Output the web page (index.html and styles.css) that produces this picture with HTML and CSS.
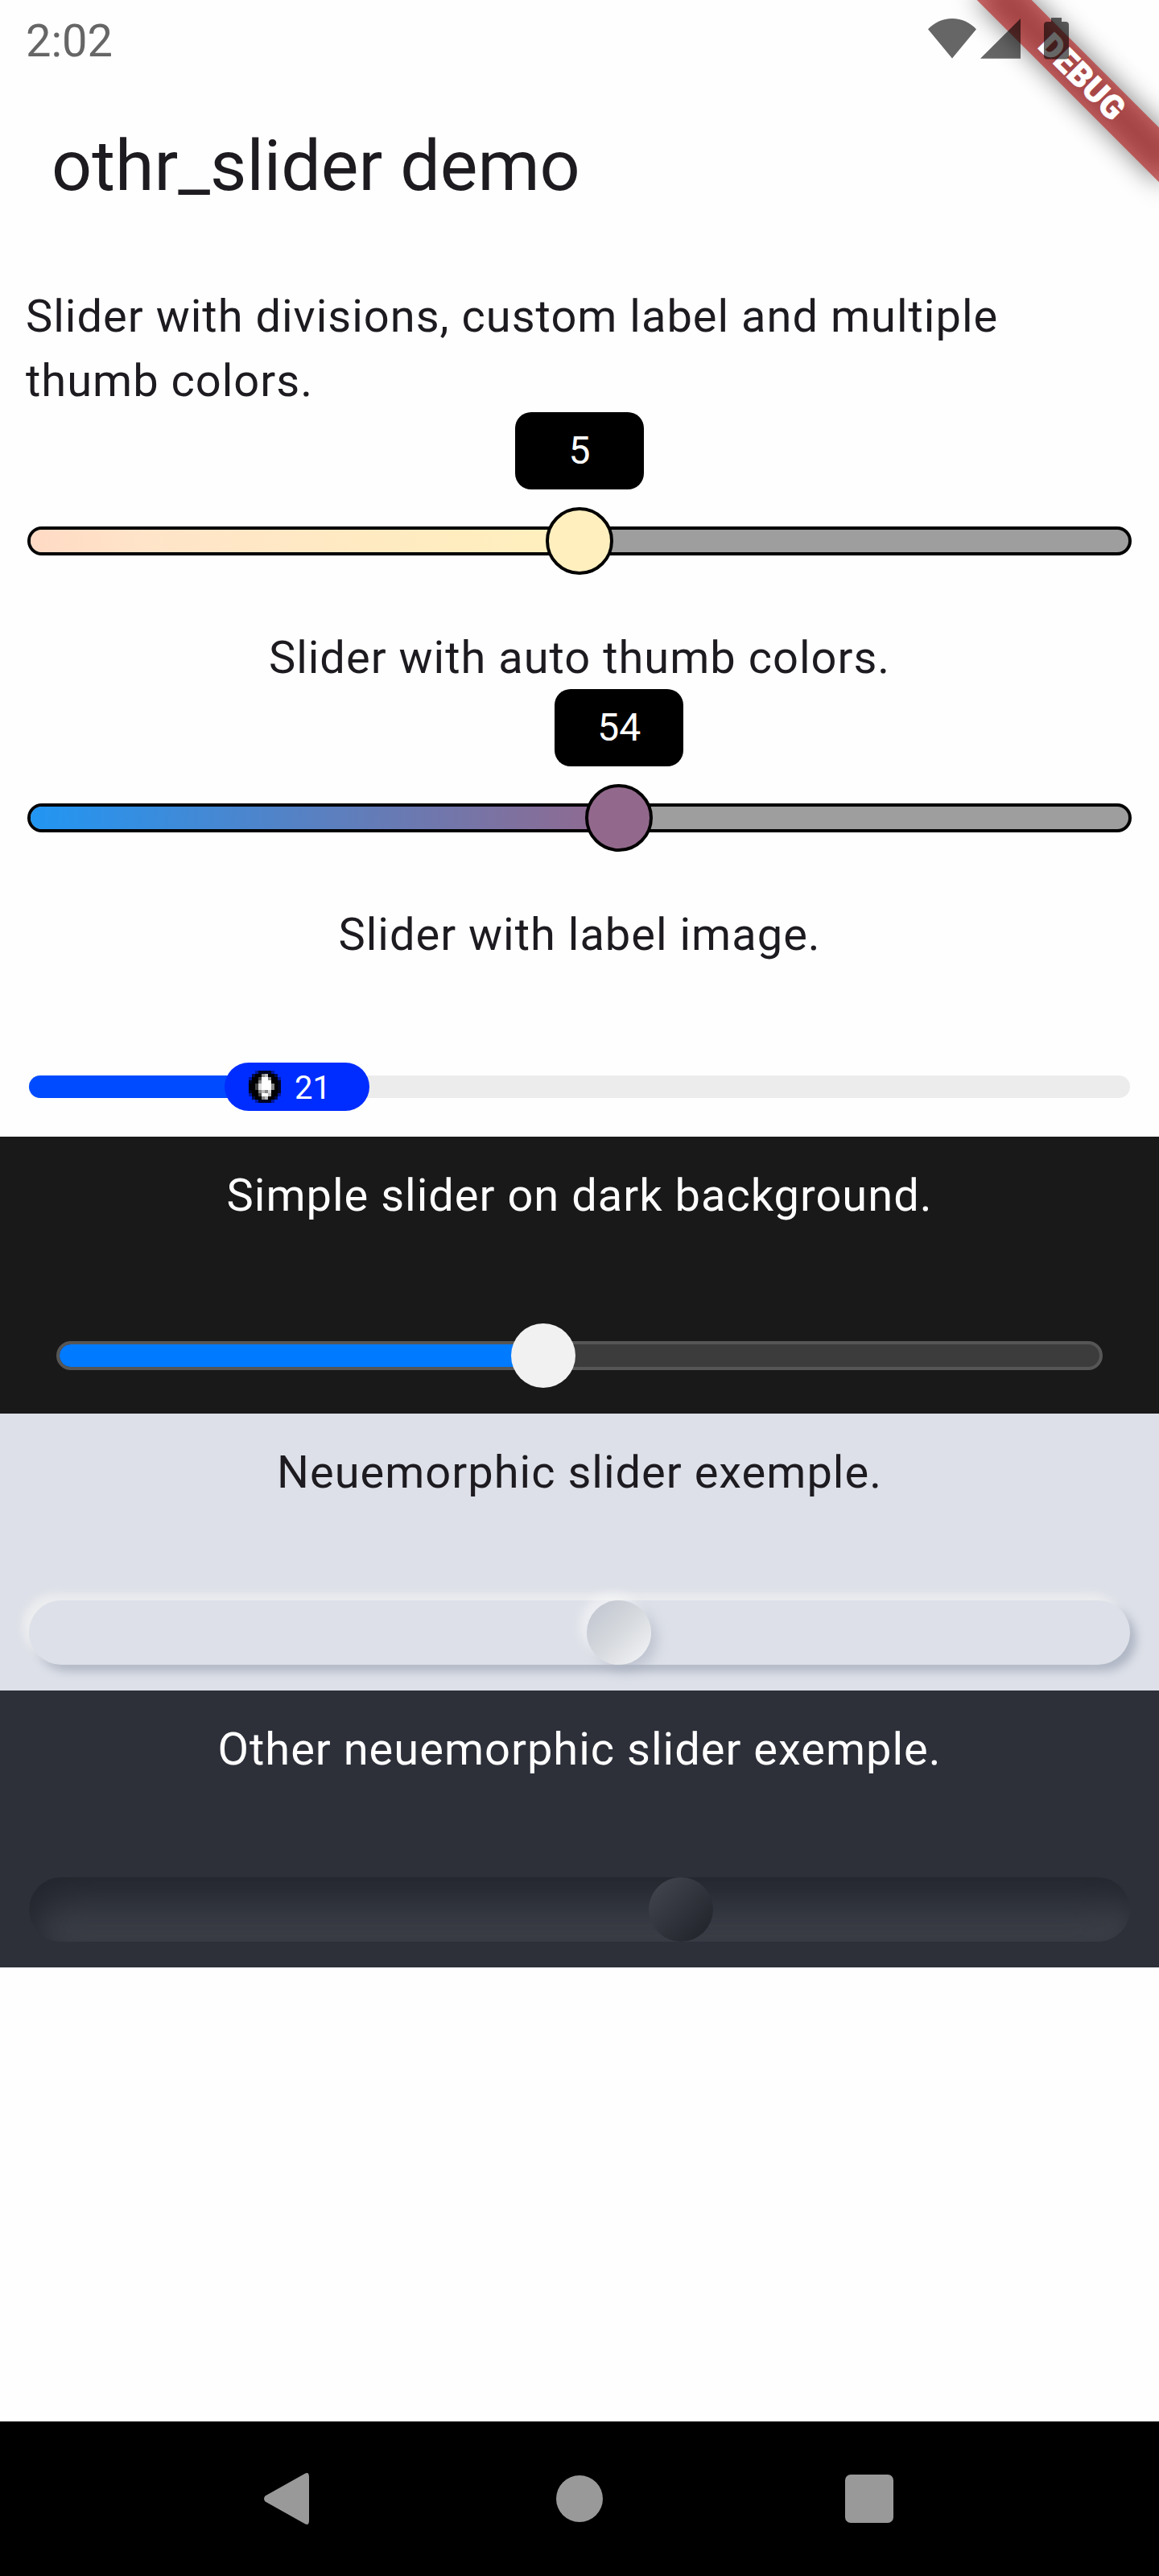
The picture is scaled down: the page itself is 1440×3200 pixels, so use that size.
FILE: index.html
```html
<!DOCTYPE html>
<html lang="en">
<head>
<meta charset="utf-8">
<title>othr_slider demo</title>
<link rel="stylesheet" href="styles.css">
</head>
<body>
<div class="screen">
  <div class="status-bar">
    <span class="clock">2:02</span>
    <svg class="status-icons" width="180" height="56" viewBox="1150 20 180 56">
      <path d="M1183 72.6 1153 36.2C1161 28 1171 23 1183 23s22 5 30 13.200z"/>
      <path d="M1218 72.800h50V23z"/>
      <path d="M1306 22h13v5h5q4 0 4 4v38.500q0 4-4 4h-23q-4 0-4-4V31q0-4 4-4h5z"/>
    </svg>
  </div>
  <header class="app-bar"><h1 class="title">othr_slider demo</h1></header>

  <main class="content">
    <section class="demo">
      <p class="caption caption-left">Slider with divisions, custom label and multiple thumb colors.</p>
      <div class="slider outlined">
        <div class="track"><div class="fill fill-peach" style="width:50%"></div></div>
        <div class="thumb thumb-cream" style="left:50%"></div>
        <div class="tooltip" style="left:50%">5</div>
      </div>
    </section>

    <section class="demo">
      <p class="caption">Slider with auto thumb colors.</p>
      <div class="slider outlined">
        <div class="track"><div class="fill fill-blue-red" style="width:53.6%"></div></div>
        <div class="thumb thumb-plum" style="left:53.6%"></div>
        <div class="tooltip" style="left:53.6%">54</div>
      </div>
    </section>

    <section class="demo">
      <p class="caption">Slider with label image.</p>
      <div class="slider pilled">
        <div class="track"><div class="fill fill-blue" style="width:21%"></div></div>
        <div class="pill">
          <svg class="coin" width="40" height="40" viewBox="0 0 10 10" shape-rendering="crispEdges">
            <path fill="#000" d="M3 0h4v1h1v1h1v1h1v4H9v1H8v1H7v1H3V9H2V8H1V7H0V3h1V2h1V1h1z"/>
            <path fill="#0018a0" d="M2 0h1v1H2zM7 0h1v1H7zM0 2h1v1H0zM9 2h1v1H9zM0 7h1v1H0zM9 7h1v1H9zM2 9h1v1H2zM7 9h1v1H7z"/>
            <path fill="#000c50" d="M1 1h1v1H1zM8 1h1v1H8zM1 8h1v1H1zM8 8h1v1H8z"/>
            <path fill="#000522" d="M3 0h4v1H3zM0 3h1v1H0zM9 3h1v4H9zM0 6h1v1H0zM3 9h4v1H3z"/>
            <path fill="#fff" d="M4 2h2v1H4zM4 3h3v3H4zM4 7h2v1H4z"/>
            <path fill="#ddd" d="M3 4h1v2H3zM6 6h1v1H6z"/>
            <path fill="#bbb" d="M5 1h1v1H5zM4 6h1v1H4zM6 7h1v1H6zM5 8h1v1H5z"/>
            <path fill="#888" d="M4 1h1v1H4zM6 2h1v1H6zM3 3h1v1H3zM3 6h1v1H3zM5 6h1v1H5zM4 8h1v1H4zM7 4h1v2H7z"/>
            <path fill="#444" d="M3 2h1v1H3zM3 7h1v1H3zM2 4h1v2H2z"/>
          </svg>
          <span class="pill-value">21</span>
        </div>
      </div>
    </section>

    <section class="demo demo-dark">
      <p class="caption">Simple slider on dark background.</p>
      <div class="slider simple">
        <div class="track"><div class="fill fill-azure" style="width:46.500%"></div></div>
        <div class="thumb thumb-white" style="left:46.500%"></div>
      </div>
    </section>

    <section class="demo demo-soft">
      <p class="caption">Neuemorphic slider exemple.</p>
      <div class="slider raised">
        <div class="track"></div>
        <div class="thumb thumb-raised" style="left:53.600%"></div>
      </div>
    </section>

    <section class="demo demo-slate">
      <p class="caption">Other neuemorphic slider exemple.</p>
      <div class="slider sunken">
        <div class="track"></div>
        <div class="thumb thumb-sunken" style="left:59.200%"></div>
      </div>
    </section>
  </main>

  <nav class="nav-bar">
    <svg width="64" height="66" viewBox="0 0 64 66"><path d="M1.500 29.500 50.500 2Q56-1.500 56 6v54q0 7.500-5.500 4L1.500 36.500q-3-3.500 0-7z"/></svg>
    <svg width="60" height="60" viewBox="0 0 60 60"><circle cx="30" cy="30" r="29"/></svg>
    <svg width="60" height="60" viewBox="0 0 60 60"><rect width="60" height="60" rx="7"/></svg>
  </nav>

  <div class="banner-clip">
    <div class="banner"><div class="banner-shadow"></div><div class="banner-strip">DEBUG</div></div>
  </div>
</div>
</body>
</html>
```
FILE: styles.css
```css
* { box-sizing: border-box; }

body {
  margin: 0;
  background: #fefefe;
  font-family: Roboto, "Liberation Sans", sans-serif;
  color: #1d1b20;
}

.screen {
  position: relative;
  display: flex;
  flex-direction: column;
  width: 1440px;
  height: 3200px;
  overflow: hidden;
}

/* Status bar */
.status-bar {
  position: relative;
  z-index: 3;
  display: flex;
  justify-content: space-between;
  height: 96px;
  padding: 20px 110px 0 32px;
}
.clock { font-size: 56px; line-height: 62px; color: #666; }
.status-icons { fill: rgba(0, 0, 0, .6); }

/* App bar */
.app-bar { display: flex; align-items: center; height: 224px; padding: 0 64px 4px; }
.title { margin: 0; font-size: 88px; font-weight: 400; line-height: 112px; }

/* Demo sections */
.content { flex: 1; }
.demo { padding: 32px 0; }
.caption {
  margin: 0;
  padding: 1px 32px 0;
  font-size: 56px;
  line-height: 80px;
  letter-spacing: 1px;
  text-align: center;
}
.caption + .slider { margin-top: -1px; }
.caption-left { text-align: left; }
.demo-dark { background: #191919; color: #fff; }
.demo-soft { background: #dde0e8; }
.demo-slate { background: #2d3039; color: #fff; }

/* Sliders */
.slider {
  position: relative;
  display: flex;
  align-items: flex-end;
  height: 200px;
  margin: 0 36px;
}
.track { flex: 1; overflow: hidden; }
.fill { height: 100%; }
.thumb {
  position: absolute;
  bottom: 0;
  width: 80px;
  height: 80px;
  border-radius: 50%;
  transform: translateX(-50%);
}

.outlined { padding-bottom: 22px; }
.outlined .track {
  height: 36px;
  margin: 0 -2px;
  border: 4px solid #000;
  border-radius: 18px;
  background: #9e9e9e;
}
.outlined .thumb { bottom: -2px; width: 84px; height: 84px; border: 4px solid #000; }
.fill-peach { background: linear-gradient(90deg, #ffdac4 0, #ffe4c9 20%, #ffedbf 80%, #fff0be); }
.fill-blue-red { background: linear-gradient(90deg, #2196f3, #93698d); }
.thumb-cream { background: #ffefbf; }
.thumb-plum { background: #92698c; }
.tooltip {
  position: absolute;
  top: 0;
  width: 160px;
  height: 96px;
  border-radius: 20px;
  background: #000;
  color: #fff;
  font-size: 48px;
  line-height: 96px;
  text-align: center;
  transform: translateX(-50%);
}

.pilled { height: 180px; padding-bottom: 16px; }
.pilled .track { height: 28px; border-radius: 14px; background: #ececec; }
.fill-blue { background: #004bff; }
.pill {
  position: absolute;
  left: 243px;
  bottom: 0;
  display: flex;
  align-items: center;
  gap: 17px;
  width: 180px;
  height: 60px;
  padding-left: 30px;
  border-radius: 30px;
  background: #002dff;
  color: #fff;
  font-size: 40px;
  line-height: 60px;
}
.pill-value { padding-top: 3px; }

.simple { margin: 0 72px; padding-bottom: 22px; }
.simple .track {
  height: 36px;
  margin: 0 -2px;
  border: 4px solid #565656;
  border-radius: 18px;
  background: #3c3c3c;
}
.simple .fill { border-radius: 14px 0 0 14px; }
.fill-azure { background: #007aff; }
.thumb-white { background: #f1f1f1; }

.raised .track, .sunken .track { height: 80px; border-radius: 40px; }
.raised .track {
  background: #dde0e8;
  box-shadow: -8px -8px 12px rgba(240, 241, 241, .8), 8px 8px 12px #b0b7c5;
}
.thumb-raised {
  background: linear-gradient(135deg, #c4c8d2 12%, #d6d9dd 50%, #eceef1 85%);
  box-shadow: -8px -8px 14px rgba(255, 255, 255, .5), 8px 8px 14px rgba(166, 173, 190, .5);
}
.sunken .track {
  background: #343740;
  box-shadow: inset 10px 20px 40px #23252d, inset -6px -20px 40px #3f424a;
}
.thumb-sunken { background: linear-gradient(135deg, #40434b 12%, #23252d 88%); }

/* System navigation */
.nav-bar {
  display: grid;
  grid-template-columns: repeat(3, 360px);
  place-content: center;
  place-items: center;
  height: 192px;
  background: #000;
  fill: #999;
}

/* Corner ribbon, drawn over the page */
.banner-clip {
  position: absolute;
  inset: 0 0 auto auto;
  z-index: 2;
  width: 500px;
  height: 500px;
  overflow: hidden;
}
.banner {
  position: absolute;
  top: 0;
  left: 500px;
  width: 0;
  height: 0;
  transform: rotate(45deg);
}
.banner-shadow, .banner-strip {
  position: absolute;
  top: 112px;
  left: -160px;
  width: 320px;
  height: 48px;
}
.banner-shadow { background: rgba(0, 0, 0, .5); filter: blur(16px); }
.banner-strip {
  background: rgba(183, 28, 28, .627);
  color: #fff;
  font-size: 40.800px;
  font-weight: 900;
  line-height: 46px;
  text-align: center;
  letter-spacing: .300px;
  -webkit-text-stroke: .600px #fff;
}
```
